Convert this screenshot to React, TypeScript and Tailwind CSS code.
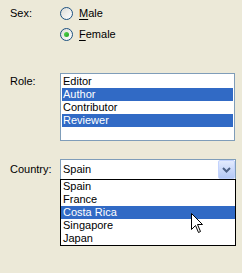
const roles = [
  { name: "Editor", on: false },
  { name: "Author", on: true },
  { name: "Contributor", on: false },
  { name: "Reviewer", on: true },
];

const countries = ["Spain", "France", "Costa Rica", "Singapore", "Japan"];

function Radio({ checked, accel, rest }: { checked?: boolean; accel: string; rest: string }) {
  return (
    <div className="h-[21px] flex items-center">
      <div className="w-[13px] h-[13px] rounded-full border border-[#1C5180] bg-gradient-to-br from-[#DCDCD7] to-white flex items-center justify-center">
        {checked && (
          <div className="w-[5px] h-[5px] rounded-full bg-gradient-to-br from-[#55D751] to-[#21A121]" />
        )}
      </div>
      <span className="ml-[6px]">
        <span className="underline underline-offset-[2px]">{accel}</span>
        {rest}
      </span>
    </div>
  );
}

export default function App() {
  return (
    <div className="w-[242px] h-[273px] bg-[#ECE9D8] text-[11px] leading-[13px] text-black relative overflow-hidden font-['Liberation_Sans',Arial,sans-serif] pt-[3px]">
      {/* Sex */}
      <div className="flex">
        <div className="w-[60px] pl-[10px] h-[21px] flex items-center">Sex:</div>
        <div className="flex flex-col">
          <Radio accel="M" rest="ale" />
          <Radio checked accel="F" rest="emale" />
        </div>
      </div>

      {/* Role */}
      <div className="flex mt-[28px]">
        <div className="w-[60px] pl-[10px] pt-[2px]">Role:</div>
        <div className="w-[175px] h-[68px] border border-[#7F9DB9] bg-white p-[1px]">
          {roles.map((r) => (
            <div
              key={r.name}
              className={
                r.on
                  ? "h-[13px] pl-[1px] bg-[#316AC5] text-white"
                  : "h-[13px] pl-[1px]"
              }
            >
              {r.name}
            </div>
          ))}
        </div>
      </div>

      {/* Country */}
      <div className="flex mt-[18px]">
        <div className="w-[60px] pl-[10px] h-[21px] flex items-center">Country:</div>
        <div className="flex flex-col w-[176px]">
          <div className="h-[21px] border border-[#7F9DB9] bg-white flex items-center">
            <span className="flex-1 pl-[2px]">Spain</span>
            <div className="w-[17px] h-[19px] rounded-[2px] border border-[#C3D3FD] bg-gradient-to-b from-[#E3EBFE] to-[#B4C8F6] flex items-center justify-center">
              <svg width="9" height="6" viewBox="0 0 9 6">
                <path d="M1 1 L4.5 4.5 L8 1" fill="none" stroke="#4D6185" strokeWidth="2" />
              </svg>
            </div>
          </div>
          <div className="border border-black bg-white -mt-[1px]">
            {countries.map((c) => (
              <div
                key={c}
                className={
                  c === "Costa Rica"
                    ? "h-[13px] pl-[2px] bg-[#316AC5] text-white"
                    : "h-[13px] pl-[2px]"
                }
              >
                {c}
              </div>
            ))}
          </div>
        </div>
      </div>

      {/* mouse pointer */}
      <svg className="absolute left-[191px] top-[213px]" width="12" height="21" viewBox="0 0 12 21">
        <path
          d="M0.5 0.5 V16.5 L4.5 12.5 L7.5 19.5 L9.5 18.5 L6.5 11.5 H11.5 Z"
          fill="white"
          stroke="black"
          strokeWidth="1"
        />
      </svg>
    </div>
  );
}
